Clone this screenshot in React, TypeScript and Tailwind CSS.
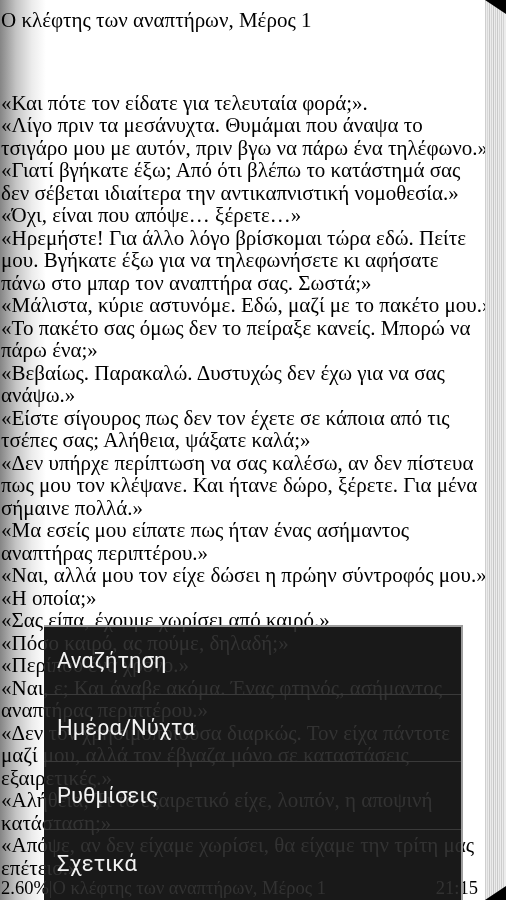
import React from "react";

const lines: string[] = [
  "«Και πότε τον είδατε για τελευταία φορά;».",
  "«Λίγο πριν τα μεσάνυχτα. Θυμάμαι που άναψα το",
  "τσιγάρο μου με αυτόν, πριν βγω να πάρω ένα τηλέφωνο.»",
  "«Γιατί βγήκατε έξω; Από ότι βλέπω το κατάστημά σας",
  "δεν σέβεται ιδιαίτερα την αντικαπνιστική νομοθεσία.»",
  "«Όχι, είναι που απόψε… ξέρετε…»",
  "«Ηρεμήστε! Για άλλο λόγο βρίσκομαι τώρα εδώ. Πείτε",
  "μου. Βγήκατε έξω για να τηλεφωνήσετε κι αφήσατε",
  "πάνω στο μπαρ τον αναπτήρα σας. Σωστά;»",
  "«Μάλιστα, κύριε αστυνόμε. Εδώ, μαζί με το πακέτο μου.»",
  "«Το πακέτο σας όμως δεν το πείραξε κανείς. Μπορώ να",
  "πάρω ένα;»",
  "«Βεβαίως. Παρακαλώ. Δυστυχώς δεν έχω για να σας",
  "ανάψω.»",
  "«Είστε σίγουρος πως δεν τον έχετε σε κάποια από τις",
  "τσέπες σας; Αλήθεια, ψάξατε καλά;»",
  "«Δεν υπήρχε περίπτωση να σας καλέσω, αν δεν πίστευα",
  "πως μου τον κλέψανε. Και ήτανε δώρο, ξέρετε. Για μένα",
  "σήμαινε πολλά.»",
  "«Μα εσείς μου είπατε πως ήταν ένας ασήμαντος",
  "αναπτήρας περιπτέρου.»",
  "«Ναι, αλλά μου τον είχε δώσει η πρώην σύντροφός μου.»",
  "«Η οποία;»",
  "«Σας είπα, έχουμε χωρίσει από καιρό.»",
  "«Πόσο καιρό, ας πούμε, δηλαδή;»",
  "«Περίπου ένα χρόνο.»",
  "«Ναι, ε; Και άναβε ακόμα. Ένας φτηνός, ασήμαντος",
  "αναπτήρας περιπτέρου.»",
  "«Δεν τον χρησιμοποιούσα διαρκώς. Τον είχα πάντοτε",
  "μαζί μου, αλλά τον έβγαζα μόνο σε καταστάσεις",
  "εξαιρετικές.»",
  "«Αλήθεια; Τι το εξαιρετικό είχε, λοιπόν, η αποψινή",
  "κατάσταση;»",
  "«Απόψε, αν δεν είχαμε χωρίσει, θα είχαμε την τρίτη μας",
  "επέτειο.»",
];

const stripes = [
  { x: 0, c: "#cfcfcf" },
  { x: 2, c: "#d8d8d8" },
  { x: 4, c: "#c9c9c9" },
  { x: 6, c: "#d4d4d4" },
  { x: 8, c: "#c6c6c6" },
  { x: 10, c: "#d2d2d2" },
  { x: 12, c: "#cacaca" },
  { x: 14, c: "#d6d6d6" },
  { x: 16, c: "#cdcdcd" },
  { x: 18, c: "#d3d3d3" },
];

function PageEdge() {
  return (
    <svg width="21" height="900" viewBox="0 0 21 900" className="block shrink-0">
      <rect x="0" y="0" width="21" height="900" fill="#ececec" />
      {stripes.map((s) => (
        <rect key={s.x} x={s.x} y="0" width="1" height="900" fill={s.c} />
      ))}
      <polygon points="0,0 21,0 21,14" fill="#000" />
      <polygon points="0,900 21,886 21,900" fill="#000" />
    </svg>
  );
}

const menuItems = ["Αναζήτηση", "Ημέρα/Νύχτα", "Ρυθμίσεις", "Σχετικά"];

export default function App() {
  return (
    <div className="relative flex h-[900px] w-[506px] overflow-hidden bg-white text-black font-['Liberation_Serif',serif]">
      <div className="flex min-w-0 flex-1 flex-col overflow-hidden bg-[linear-gradient(to_right,#858585_0px,#c4c4c4_16px,#ececec_32px,#ffffff_46px)] pl-[1px]">
        <div className="mt-[9px] whitespace-nowrap text-[21px] leading-[22.5px]">
          Ο κλέφτης των αναπτήρων, Μέρος 1
        </div>
        <div className="mt-[60px] flex flex-col">
          {lines.map((l, i) => (
            <div key={i} className="whitespace-nowrap text-[21px] leading-[22.5px]">
              {l}
            </div>
          ))}
        </div>
        <div className="flex items-center justify-between whitespace-nowrap pr-[7px] text-[18.5px] leading-[18px]">
          <span>2.60%|Ο κλέφτης των αναπτήρων, Μέρος 1</span>
          <span>21:15</span>
        </div>
      </div>
      <PageEdge />
      <div className="absolute bottom-0 left-[44px] top-[625px] w-[419px] border-r-2 border-t-2 border-[#9e9e9e] bg-[#1c1c1c]/90 backdrop-invert">
        {menuItems.map((m, i) => (
          <div
            key={m}
            className={`flex h-[67.5px] items-center pl-[13px] font-['Roboto',sans-serif] text-[22px] text-[#f2f2f2] ${
              i < menuItems.length - 1 ? "border-b border-[#3a3a3a]" : ""
            }`}
          >
            {m}
          </div>
        ))}
      </div>
    </div>
  );
}
